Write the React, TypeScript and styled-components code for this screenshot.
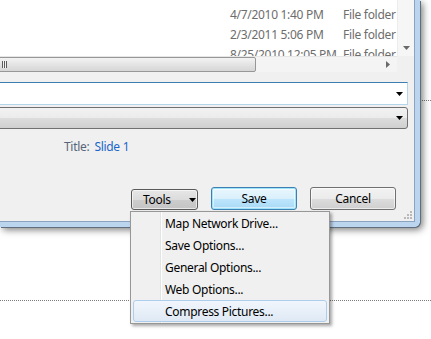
import styled, { createGlobalStyle } from "styled-components";

const GlobalStyle = createGlobalStyle`
  html, body {
    margin: 0;
    padding: 0;
    background: #ffffff;
  }
  body {
    font-family: "Noto Sans", "Open Sans", sans-serif;
    font-size: 12px;
    letter-spacing: -0.3px;
  }
`;

interface FileRow {
  modified: string;
  kind: string;
}

const FILES: FileRow[] = [
  { modified: "4/7/2010 1:40 PM", kind: "File folder" },
  { modified: "2/3/2011 5:06 PM", kind: "File folder" },
  { modified: "8/25/2010 12:05 PM", kind: "File folder" },
];

const MENU_ITEMS = [
  "Map Network Drive...",
  "Save Options...",
  "General Options...",
  "Web Options...",
  "Compress Pictures...",
];

const Arrow = ({ dir }: { dir: "down" | "right" }) =>
  dir === "down" ? (
    <svg width="7" height="4" viewBox="0 0 7 4">
      <path d="M0 0h7L3.5 4z" fill="currentColor" />
    </svg>
  ) : (
    <svg width="4" height="7" viewBox="0 0 4 7">
      <path d="M0 0v7l4-3.5z" fill="currentColor" />
    </svg>
  );

const App = () => {
  return (
    <>
      <GlobalStyle />
      <Page>
        <Slide>
          <Placeholder />
        </Slide>

        <Window>
          <Content>
            <Browser>
              <ListArea>
                {FILES.map((file) => (
                  <ListRow key={file.modified}>
                    <DateCell>{file.modified}</DateCell>
                    <KindCell>{file.kind}</KindCell>
                  </ListRow>
                ))}
              </ListArea>
              <VScroll>
                <ScrollButton>
                  <Arrow dir="down" />
                </ScrollButton>
              </VScroll>
              <HScroll>
                <Thumb>
                  <Grip />
                </Thumb>
                <ScrollButton>
                  <Arrow dir="right" />
                </ScrollButton>
              </HScroll>
              <Corner />
            </Browser>

            <Combo $focused>
              <ComboArrow>
                <Arrow dir="down" />
              </ComboArrow>
            </Combo>
            <Combo>
              <ComboArrow>
                <Arrow dir="down" />
              </ComboArrow>
            </Combo>

            <MetaRow>
              <MetaLabel>Title:</MetaLabel>
              <MetaValue>Slide 1</MetaValue>
            </MetaRow>

            <ButtonRow>
              <Button $variant="pressed" $width={67}>
                <ToolsLabel>Tools</ToolsLabel>
                <Arrow dir="down" />
              </Button>
              <Button $variant="default" $width={86}>
                Save
              </Button>
              <Button $width={86}>Cancel</Button>
            </ButtonRow>

            <ResizeGrip width="8" height="8" viewBox="0 0 8 8">
              <g fill="#b9b9b9">
                <rect x="6" y="0" width="2" height="2" />
                <rect x="3" y="3" width="2" height="2" />
                <rect x="6" y="3" width="2" height="2" />
                <rect x="0" y="6" width="2" height="2" />
                <rect x="3" y="6" width="2" height="2" />
                <rect x="6" y="6" width="2" height="2" />
              </g>
            </ResizeGrip>
          </Content>
        </Window>

        <Menu>
          {MENU_ITEMS.map((item, idx) => (
            <MenuItem key={item} $active={idx === MENU_ITEMS.length - 1}>
              {item}
            </MenuItem>
          ))}
        </Menu>
      </Page>
    </>
  );
};

export default App;

const Page = styled.div`
  position: relative;
  width: 431px;
  height: 339px;
  overflow: hidden;
  background: #ffffff;
`;

const Slide = styled.div`
  padding-top: 100px;
`;

const Placeholder = styled.div`
  margin: 0 -10px;
  height: 199px;
  border-top: 1px dotted #7a7a7a;
  border-bottom: 1px dotted #7a7a7a;
`;

const Window = styled.div`
  position: absolute;
  top: 0;
  left: 0;
  width: 415px;
  height: 222px;
  border-right: 5px solid #bcd5ee;
  border-bottom: 5px solid #bcd5ee;
  border-bottom-right-radius: 6px;
  box-shadow: 1px 1px 0 #5f6e7e, 3px 3px 7px rgba(0, 0, 0, 0.5);
`;

const Content = styled.div`
  position: relative;
  display: flex;
  flex-direction: column;
  height: 221px;
  width: 414px;
  background: #f0f0f0;
  border-right: 1px solid #8aa4bf;
  border-bottom: 1px solid #8aa4bf;
`;

const Browser = styled.div`
  display: grid;
  grid-template-columns: 1fr 17px;
  grid-template-rows: 56px 16px;
  height: 72px;
`;

const ListArea = styled.div`
  background: #ffffff;
  overflow: hidden;
  padding-top: 4px;
  box-sizing: border-box;
`;

const ListRow = styled.div`
  display: flex;
  height: 20px;
  align-items: center;
  color: #6d6d6d;
  white-space: nowrap;
`;

const DateCell = styled.span`
  width: 113px;
  padding-left: 230px;
  flex: none;
`;

const KindCell = styled.span`
  flex: 1;
  overflow: hidden;
`;

const VScroll = styled.div`
  display: flex;
  flex-direction: column;
  justify-content: flex-end;
  background: #f6f6f6;
  border-left: 1px solid #ececec;
`;

const ScrollButton = styled.div`
  display: flex;
  align-items: center;
  justify-content: center;
  width: 17px;
  height: 16px;
  color: #6a6a6a;
`;

const HScroll = styled.div`
  display: flex;
  align-items: center;
  justify-content: space-between;
  background: #f4f4f4;
  border-top: 1px solid #e6e6e6;
  padding-right: 1px;
`;

const Thumb = styled.div`
  display: flex;
  align-items: center;
  margin-left: -20px;
  width: 276px;
  height: 15px;
  box-sizing: border-box;
  border: 1px solid #979797;
  border-radius: 2px;
  background: linear-gradient(#f3f3f3, #e4e4e4 50%, #d6d6d6);
  padding-left: 21px;
`;

const Grip = styled.div`
  width: 5px;
  height: 7px;
  background: repeating-linear-gradient(
    to right,
    #5c5c5c 0 1px,
    #f4f4f4 1px 2px
  );
`;

const Corner = styled.div`
  background: #f0f0f0;
`;

const Combo = styled.div<{ $focused?: boolean }>`
  display: flex;
  align-items: center;
  justify-content: flex-end;
  margin: ${(p) => (p.$focused ? "10px" : "2px")} 6px 0 -4px;
  height: ${(p) => (p.$focused ? "23px" : "22px")};
  box-sizing: border-box;
  border: 1px solid ${(p) => (p.$focused ? "#b5d6ea" : "#707070")};
  border-top-color: ${(p) => (p.$focused ? "#3c7fb1" : "#707070")};
  border-radius: ${(p) => (p.$focused ? "0" : "3px")};
  background: ${(p) =>
    p.$focused
      ? "#ffffff"
      : "linear-gradient(#f2f2f2, #ebebeb 50%, #dddddd 51%, #cfcfcf)"};
`;

const ComboArrow = styled.span`
  display: flex;
  padding-right: 4px;
  color: #000000;
`;

const MetaRow = styled.div`
  display: flex;
  align-items: center;
  gap: 5px;
  margin-top: 9px;
  padding-left: 64px;
  height: 16px;
`;

const MetaLabel = styled.span`
  color: #56657a;
`;

const MetaValue = styled.span`
  color: #1a66cc;
`;

const ButtonRow = styled.div`
  display: flex;
  align-items: flex-end;
  justify-content: flex-end;
  gap: 13px;
  margin-top: auto;
  margin-bottom: 11px;
  padding-right: 18px;
`;

const Button = styled.div<{ $variant?: "pressed" | "default"; $width: number }>`
  display: flex;
  align-items: center;
  justify-content: center;
  width: ${(p) => p.$width}px;
  height: ${(p) => (p.$variant === "pressed" ? "21px" : "23px")};
  box-sizing: border-box;
  border: 1px solid
    ${(p) =>
      p.$variant === "pressed"
        ? "#5a5a5a"
        : p.$variant === "default"
        ? "#3c7fb1"
        : "#707070"};
  border-radius: 3px;
  color: #000000;
  background: ${(p) =>
    p.$variant === "pressed"
      ? "linear-gradient(#e6e6e6, #dcdcdc 50%, #cdcdcd 51%, #c4c4c4)"
      : p.$variant === "default"
      ? "linear-gradient(#eaf6fd, #d9f0fc 50%, #bee6fd 51%, #a7d9f5)"
      : "linear-gradient(#f2f2f2, #ebebeb 50%, #dddddd 51%, #cfcfcf)"};
  box-shadow: ${(p) =>
    p.$variant === "default"
      ? "inset 0 0 0 1px #9fe3fb, inset 0 0 0 2px rgba(255,255,255,0.5)"
      : "inset 0 0 0 1px rgba(255,255,255,0.6)"};
  ${(p) =>
    p.$variant === "pressed" &&
    `
    justify-content: flex-start;
    padding-left: 11px;
    gap: 18px;
  `}
`;

const ToolsLabel = styled.span``;

const ResizeGrip = styled.svg`
  position: absolute;
  right: 2px;
  bottom: 2px;
`;

const Menu = styled.div`
  position: absolute;
  top: 211px;
  left: 130px;
  width: 200px;
  box-sizing: border-box;
  padding: 0 2px 1px;
  border: 1px solid #979797;
  background-color: #f0f0f0;
  background-image: linear-gradient(
    to right,
    transparent 29px,
    #e2e3e3 29px,
    #e2e3e3 30px,
    #ffffff 30px,
    #ffffff 31px,
    transparent 31px
  );
  box-shadow: 2px 2px 3px rgba(0, 0, 0, 0.35);
`;

const MenuItem = styled.div<{ $active?: boolean }>`
  display: flex;
  align-items: center;
  height: 22px;
  box-sizing: border-box;
  padding-left: 31px;
  color: #000000;
  border: 1px solid ${(p) => (p.$active ? "#aeccec" : "transparent")};
  border-radius: 3px;
  background: ${(p) =>
    p.$active ? "linear-gradient(#f1f6fc, #dfe9f5)" : "transparent"};
`;
